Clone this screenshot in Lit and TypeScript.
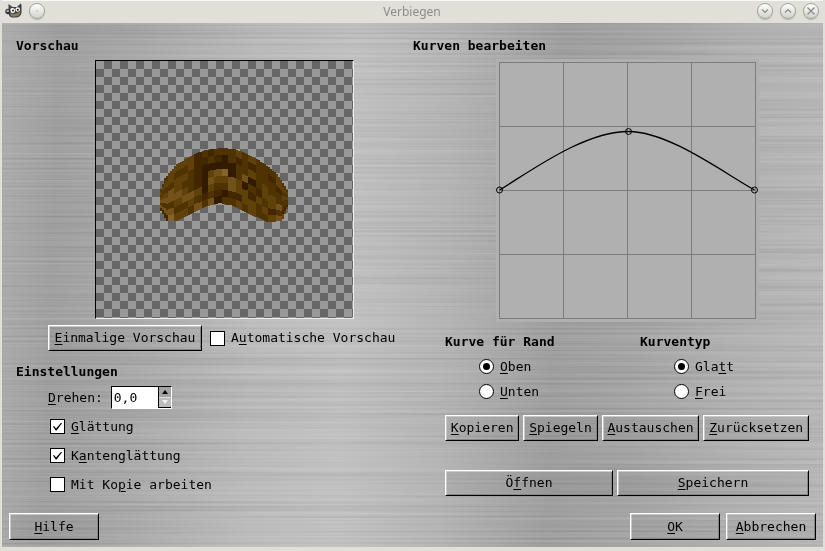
import { LitElement, html, svg, css } from "lit";
import { customElement } from "lit/decorators.js";

/** Label with its keyboard mnemonic underlined. */
const mnemonic = (text: string, at: number) =>
  html`<span>${text.slice(0, at)}<u>${text[at]}</u>${text.slice(at + 1)}</span>`;

/* Wood texture: one digit per texel, 0 = darkest, 5 = lightest. */
const WOOD = [
  "2333312122232322232",
  "3322311210212122133",
  "2233210000022322212",
  "3432210345024023223",
  "4443210433430213322",
  "2234430322433132342",
  "4422321210113323121",
  "1533242402232322343",
];
const SHADES = ["#331b00", "#422700", "#503303", "#60410a", "#72511b", "#84642c"];
const TOP_X = [160, 165, 176, 190, 205, 222, 235, 250, 265, 278, 284, 288];
const TOP = [192, 178, 165, 156, 150, 148, 149, 155, 164, 175, 184, 192];
const BOTTOM_X = [160, 167, 176, 186, 196, 208, 220, 234, 244, 256, 268, 282, 288];
const BOTTOM = [209, 221, 221, 216, 211, 206, 203, 206, 211, 217, 222, 221, 207];

function interpolate(xs: number[], ys: number[], x: number): number {
  let i = 0;
  while (i < xs.length - 2 && xs[i + 1] < x) i++;
  const t = (x - xs[i]) / (xs[i + 1] - xs[i]);
  return ys[i] + (ys[i + 1] - ys[i]) * t;
}

function wood() {
  const cells = [];
  for (let x = 160; x < 288; x += 2) {
    const col = Math.min(18, Math.floor((x - 160) / 6.75));
    const top = interpolate(TOP_X, TOP, x + 1);
    const bottom = interpolate(BOTTOM_X, BOTTOM, x + 1);
    for (let row = 0; row < 8; row++) {
      const y0 = Math.round(top + ((bottom - top) * row) / 8);
      const y1 = Math.round(top + ((bottom - top) * (row + 1)) / 8);
      cells.push(svg`<rect x=${x - 96} y=${y0 - 61} width="2" height=${y1 - y0}
        fill=${SHADES[Number(WOOD[row][col])]}></rect>`);
    }
  }
  return cells;
}

@customElement("app-root")
export class AppRoot extends LitElement {
  static styles = css`
    :host {
      display: flex;
      flex-direction: column;
      min-height: 100vh;
      box-sizing: border-box;
      border: solid #e0e0d8;
      border-width: 0 2px 4px 2px;
      background: #e0e0d8;
      color: #000;
      font: 13px/16px "DejaVu Sans Mono", monospace;
    }
    * { box-sizing: border-box; }
    u { text-underline-offset: 2px; text-decoration-thickness: 1px; }
    h2 { margin: 0; font-size: 13px; line-height: 16px; font-weight: bold; }

    .titlebar {
      display: grid;
      grid-template-columns: 1fr auto 1fr;
      height: 23px;
      padding: 0 4px 0 3px;
      border-top: 1px solid #f8f8f4;
      background: #e0e0d8;
    }
    .title {
      font: 12px/16px "Noto Sans", sans-serif;
      color: #8d8d8a;
      padding-top: 3px;
    }
    .controls { display: flex; gap: 7px; padding-top: 2px; }
    .controls.end { justify-content: flex-end; }
    .round {
      width: 16px;
      height: 16px;
      padding: 0;
      border: 1px solid #a5a5a0;
      border-radius: 50%;
      background: linear-gradient(#fdfdfb, #d2d2cc);
      box-shadow: 0 1px 1px #b5b5ae;
      display: grid;
      place-items: center;
    }
    .round svg { display: block; }

    .dialog {
      position: relative;
      flex: 1;
      display: flex;
      flex-direction: column;
      justify-content: space-between;
      padding: 15px 7px 7px;
      background: linear-gradient(92deg,
        #adadad 0%, #a0a0a0 7%, #a8a8a8 16%, #bababa 31%, #c0c0c0 42%,
        #b4b4b4 54%, #9f9f9f 67%, #a4a4a4 76%, #b0b0b0 88%, #b8b8b8 100%);
    }
    .grain {
      position: absolute;
      inset: 0;
      width: 100%;
      height: 100%;
      mix-blend-mode: soft-light;
      opacity: 0.35;
    }
    .panels, .footer { position: relative; }
    .panels {
      display: grid;
      grid-template-columns: 35fr 36fr;
      gap: 12px;
      padding: 0 7px;
    }
    .indent { padding-left: 32px; }

    .preview {
      display: block;
      width: 259px;
      margin: 6px auto;
      border: 1px solid #000;
      border-right-color: #eee;
      border-bottom-color: #eee;
    }
    .preview svg, .graph { display: block; }
    .graph { margin: 5px auto 12px; background: #b0b0b0; }

    .row { display: flex; align-items: center; }
    .push {
      height: 26px;
      padding: 0 4px;
      border: 1px solid;
      border-color: #fff #000 #000 #fff;
      box-shadow: inset 1px 1px #c8c8c8, inset -1px -1px #858585;
      background: #00000008;
      color: inherit;
      font: inherit;
      white-space: nowrap;
    }
    .once { width: 154px; margin-right: 8px; }
    .settings-title { margin: 13px 0 6px; }
    .spin-row { gap: 8px; margin-bottom: 3px; }
    .spin {
      display: flex;
      width: 61px;
      height: 23px;
      border: 1px solid #000;
      border-right-color: #fff;
      border-bottom-color: #fff;
      background: #fff;
    }
    .spin input {
      flex: 1;
      min-width: 0;
      padding: 0 2px;
      border: 0;
      background: #fff;
      color: #000;
      font: inherit;
    }
    .arrows { display: grid; width: 13px; border: 1px solid #000; border-width: 0 0 1px 1px; }
    .arrows button {
      display: grid;
      place-items: center;
      padding: 0;
      border: 0;
      background: #a4a4a4;
    }
    .arrows button + button { background: #bcbcbc; border-top: 1px solid #ddd; }
    .arrows svg { display: block; }

    .option { display: flex; align-items: center; gap: 6px; height: 29px; }
    .option.compact { height: 25px; }
    .option input {
      appearance: none;
      flex: none;
      display: grid;
      place-items: center;
      width: 15px;
      height: 15px;
      margin: 0;
      border: 1px solid #000;
      background: #fff;
    }
    .option input[type="radio"] { border-radius: 50%; }
    .option input[type="radio"]:checked::before {
      content: "";
      width: 7px;
      height: 7px;
      border-radius: 50%;
      background: #000;
    }
    .option input[type="checkbox"]:checked::before {
      content: "";
      width: 9px;
      height: 8px;
      background: #000;
      clip-path: polygon(0 50%, 12% 44%, 34% 76%, 92% 0, 100% 8%, 40% 100%, 30% 100%);
    }
    .checks { padding-left: 34px; }
    .choices { display: grid; grid-template-columns: 1fr 1fr; gap: 26px; }
    fieldset { border: 0; margin: 0; padding: 0; min-width: 0; }
    legend { padding: 0; font-weight: bold; }
    .radios { padding: 4px 0 0 34px; }

    .tools { display: flex; gap: 4px; margin-top: 11px; }
    .tools .push { flex: 1 1 auto; }
    .files { display: grid; grid-template-columns: 7fr 8fr; gap: 4px; margin-top: 29px; }
    .footer { display: flex; gap: 6px; }
    .footer .push { min-width: 90px; height: 27px; }
    .help { margin-right: auto; }
  `;

  private check(label: string, at: number, checked: boolean) {
    return html`<label class="option">
      <input type="checkbox" .checked=${checked} />${mnemonic(label, at)}
    </label>`;
  }

  private radio(name: string, label: string, at: number, checked: boolean) {
    return html`<label class="option compact">
      <input type="radio" name=${name} .checked=${checked} />${mnemonic(label, at)}
    </label>`;
  }

  private push(label: string, at: number, extra = "") {
    return html`<button class="push ${extra}">${mnemonic(label, at)}</button>`;
  }

  private control(name: string, path: string) {
    return html`<button class="round" aria-label=${name}>
      <svg width="10" height="10" viewBox="0 0 10 10">
        <path d=${path} fill="none" stroke="#888" stroke-width="1.2"></path>
      </svg>
    </button>`;
  }

  private titlebar() {
    return html`<header class="titlebar">
      <div class="controls">
        <svg width="17" height="17" viewBox="0 0 17 17" aria-hidden="true">
          <path d="M3.500 1 L7.500 4 H12 L15.500 0.500 L16.500 1.500 L16.500 10 Q15.500 14 11.500 14.500 H7 Q4 14 3.500 10 Z" fill="#45423b"></path>
          <path d="M5 10 Q10 12.500 15.500 8.500 L14.500 12 Q10 14.500 6 13 Z" fill="#8a7d66"></path>
          <circle cx="7.500" cy="7.500" r="2.500" fill="#fff"></circle>
          <circle cx="12.700" cy="6.500" r="2.300" fill="#fff"></circle>
          <circle cx="8" cy="7.500" r="1" fill="#111"></circle>
          <circle cx="12.800" cy="6.700" r="1" fill="#111"></circle>
          <circle cx="3" cy="8.500" r="2.700" fill="#2e3338"></circle>
          <circle cx="2.700" cy="8" r="1.300" fill="#aab2b8"></circle>
        </svg>
        ${this.control("Fenstermenü", "M4.500 5 H5.500")}
      </div>
      <div class="title">Verbiegen</div>
      <div class="controls end">
        ${this.control("Minimieren", "M2 3.500 L5 6.500 L8 3.500")}
        ${this.control("Maximieren", "M2 6.500 L5 3.500 L8 6.500")}
        ${this.control("Schließen", "M1.500 1.500 L8.500 8.500 M8.500 1.500 L1.500 8.500")}
      </div>
    </header>`;
  }

  private previewPanel() {
    return html`<section>
      <h2>Vorschau</h2>
      <div class="indent">
        <div class="preview">
          <svg width="257" height="257" viewBox="0 0 257 257" shape-rendering="crispEdges" role="img" aria-label="Vorschau">
            <defs>
              <pattern id="checks" width="16" height="16" patternUnits="userSpaceOnUse">
                <rect width="16" height="16" fill="#999"></rect>
                <path d="M8 0h8v8h-8z M0 8h8v8h-8z" fill="#666"></path>
              </pattern>
            </defs>
            <rect width="257" height="257" fill="url(#checks)"></rect>
            ${wood()}
          </svg>
        </div>
        <div class="row">
          ${this.push("Einmalige Vorschau", 0, "once")}
          <label class="option compact"><input type="checkbox" />${mnemonic("Automatische Vorschau", 1)}</label>
        </div>
      </div>
      <h2 class="settings-title">Einstellungen</h2>
      <div class="row spin-row indent">
        <label for="rotate">${mnemonic("Drehen:", 0)}</label>
        <div class="spin">
          <input id="rotate" type="text" value="0,0" />
          <div class="arrows">
            <button aria-label="Mehr">
              <svg width="6" height="4"><path d="M3 0 L6 4 H0 Z" fill="#000"></path></svg>
            </button>
            <button aria-label="Weniger">
              <svg width="6" height="4"><path d="M0 0 H6 L3 4 Z" fill="#eee"></path></svg>
            </button>
          </div>
        </div>
      </div>
      <div class="checks">
        ${this.check("Glättung", 0, true)}
        ${this.check("Kantenglättung", 1, true)}
        ${this.check("Mit Kopie arbeiten", 6, false)}
      </div>
    </section>`;
  }

  private curvePanel() {
    const lines = [0, 1, 2, 3, 4].map((i) => 3.5 + i * 64);
    const points = [[3.5, 131], [132.5, 72.5], [258.5, 131]];
    return html`<section>
      <h2>Kurven bearbeiten</h2>
      <div class="indent">
        <svg class="graph" width="263" height="263" viewBox="0 0 263 263" role="img" aria-label="Kurve">
          ${lines.map((p) => svg`<path d="M${p} 3V260 M3 ${p}H260" stroke="#7c7c7c"></path>`)}
          <path d="M3.500 131 C35 112 88 72.500 132.500 72.500 C172 72.500 225 112 258.500 131"
            fill="none" stroke="#000" stroke-width="1.300"></path>
          ${points.map(([x, y]) => svg`<circle cx=${x} cy=${y} r="3" fill="none" stroke="#000"></circle>`)}
        </svg>
        <div class="choices">
          <fieldset>
            <legend>Kurve für Rand</legend>
            <div class="radios">
              ${this.radio("edge", "Oben", 0, true)}
              ${this.radio("edge", "Unten", 0, false)}
            </div>
          </fieldset>
          <fieldset>
            <legend>Kurventyp</legend>
            <div class="radios">
              ${this.radio("type", "Glatt", 3, true)}
              ${this.radio("type", "Frei", 0, false)}
            </div>
          </fieldset>
        </div>
        <div class="tools">
          ${this.push("Kopieren", 0)} ${this.push("Spiegeln", 0)}
          ${this.push("Austauschen", 0)} ${this.push("Zurücksetzen", 0)}
        </div>
        <div class="files">${this.push("Öffnen", 1)} ${this.push("Speichern", 0)}</div>
      </div>
    </section>`;
  }

  render() {
    return html`
      ${this.titlebar()}
      <main class="dialog">
        <svg class="grain" aria-hidden="true">
          <filter id="brushed" x="0" y="0" width="100%" height="100%" color-interpolation-filters="sRGB">
            <feTurbulence type="fractalNoise" baseFrequency="0.002 0.4" numOctaves="3" seed="4"></feTurbulence>
            <feColorMatrix values="1 0 0 0 0  1 0 0 0 0  1 0 0 0 0  0 0 0 0 1"></feColorMatrix>
          </filter>
          <rect width="100%" height="100%" filter="url(#brushed)"></rect>
        </svg>
        <div class="panels">${this.previewPanel()} ${this.curvePanel()}</div>
        <footer class="footer">
          ${this.push("Hilfe", 0, "help")} ${this.push("OK", 0)} ${this.push("Abbrechen", 0)}
        </footer>
      </main>
    `;
  }
}
